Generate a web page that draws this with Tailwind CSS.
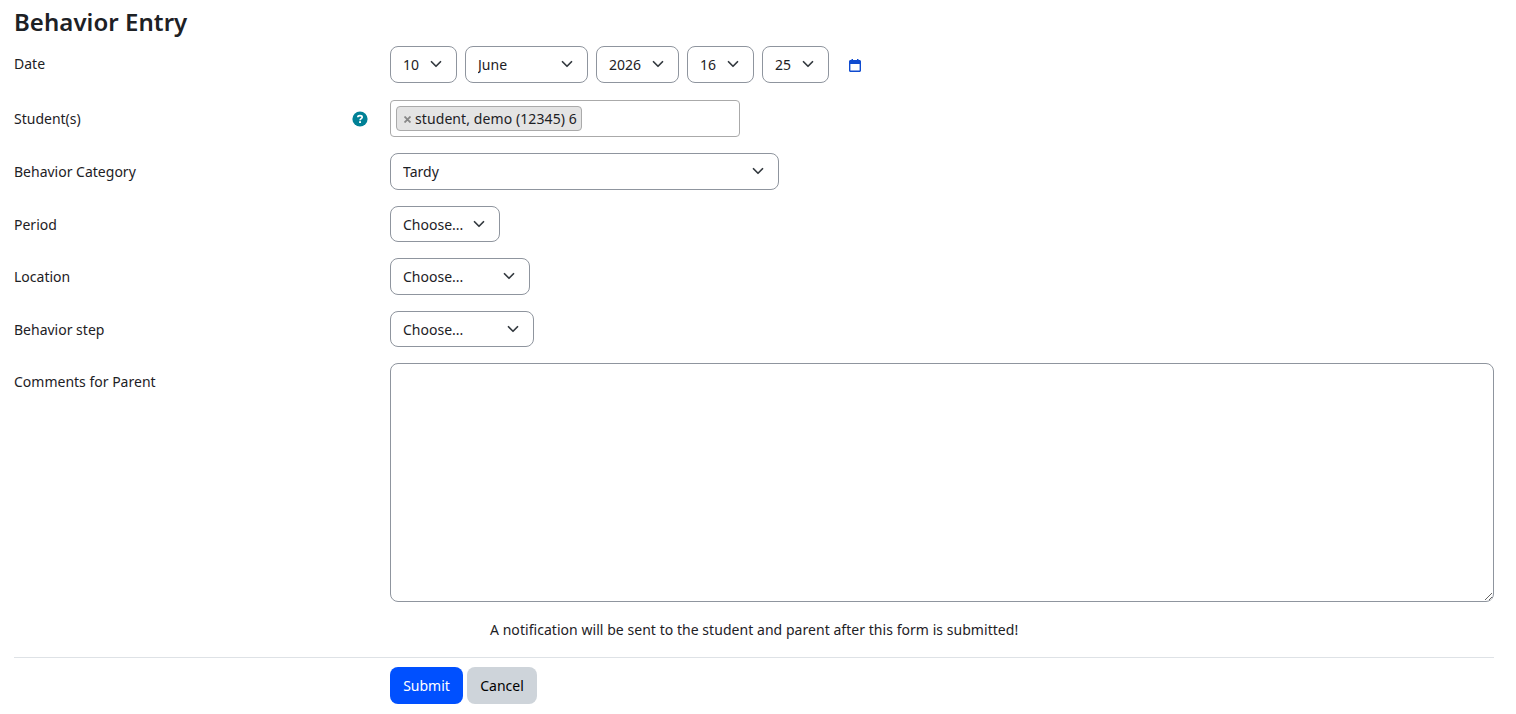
<!DOCTYPE html>
<html lang="en">
<head>
    <meta charset="UTF-8">
    <meta name="viewport" content="width=device-width, initial-scale=1.0">
    <title>Behavior Entry</title>
    <script src="https://cdn.jsdelivr.net/npm/@tailwindcss/browser@4"></script>
</head>
<body class="bg-white text-[#1d2125] font-['Noto_Sans','Open_Sans',sans-serif] text-[14px] leading-[22.5px] overflow-hidden">
<svg class="hidden">
    <symbol id="chevron" viewBox="0 0 16 16">
        <path fill="none" stroke="#343a40" stroke-linecap="round" stroke-linejoin="round" stroke-width="2.300" d="m2 5 6 6 6-6"/>
    </symbol>
</svg>

<main class="pl-[14px] pr-[22px] pt-[8px]">
    <h2 class="text-[24px] font-semibold leading-[28px] tracking-[0.05px] mb-[10px]">Behavior Entry</h2>

    <form onsubmit="return false">
        <!-- Date -->
        <div class="flex mb-[17.5px]">
            <span class="w-[376px] shrink-0 pt-[7px]">Date</span>
            <div class="flex gap-2">
                <div class="relative">
                    <select aria-label="Day" class="appearance-none block w-[67px] h-[36.5px] pl-3 pt-px border border-[#8f959e] rounded-lg bg-white"><option>10</option></select>
                    <svg class="absolute right-[15px] top-[12px] size-3 pointer-events-none"><use href="#chevron"/></svg>
                </div>
                <div class="relative">
                    <select aria-label="Month" class="appearance-none block w-[123px] h-[36.5px] pl-3 pt-px border border-[#8f959e] rounded-lg bg-white"><option>June</option></select>
                    <svg class="absolute right-[15px] top-[12px] size-3 pointer-events-none"><use href="#chevron"/></svg>
                </div>
                <div class="relative">
                    <select aria-label="Year" class="appearance-none block w-[83px] h-[36.5px] pl-3 pt-px border border-[#8f959e] rounded-lg bg-white"><option>2026</option></select>
                    <svg class="absolute right-[15px] top-[12px] size-3 pointer-events-none"><use href="#chevron"/></svg>
                </div>
                <div class="relative">
                    <select aria-label="Hour" class="appearance-none block w-[67px] h-[36.5px] pl-3 pt-px border border-[#8f959e] rounded-lg bg-white"><option>16</option></select>
                    <svg class="absolute right-[15px] top-[12px] size-3 pointer-events-none"><use href="#chevron"/></svg>
                </div>
                <div class="relative">
                    <select aria-label="Minute" class="appearance-none block w-[67px] h-[36.5px] pl-3 pt-px border border-[#8f959e] rounded-lg bg-white"><option>25</option></select>
                    <svg class="absolute right-[15px] top-[12px] size-3 pointer-events-none"><use href="#chevron"/></svg>
                </div>
                <a href="#" aria-label="Calendar" class="ml-[12px] pt-[13px]">
                    <svg class="w-3 h-[13px]" viewBox="0 0 12 13">
                        <path fill="#0f4bd0" fill-rule="evenodd" d="M2.500 0h1.500v1h4V0h1.500v1h1C11.300 1 12 1.700 12 2.500v9c0 .8-.7 1.500-1.500 1.500h-9C.7 13 0 12.300 0 11.500v-9C0 1.700.7 1 1.500 1h1zM1.400 5v6.200c0 .3.100.400.400.400h8.400c.3 0 .4-.100.400-.400V5z"/>
                    </svg>
                </a>
            </div>
        </div>

        <!-- Students -->
        <div class="flex mb-4">
            <div class="w-[376px] shrink-0 flex justify-between pt-[8px] pr-[22px]">
                <span>Student(s)</span>
                <svg class="size-4 mt-[3px]" viewBox="0 0 16 16">
                    <circle cx="8" cy="8" r="7.600" fill="#008196"/>
                    <path fill="none" stroke="#fff" stroke-width="1.700" d="M5.800 6.300C5.900 5.100 6.800 4.700 8 4.700c1.300 0 2.200.6 2.200 1.600C10.200 7.600 8.100 7.600 8.100 9.200"/>
                    <rect x="7.100" y="10.200" width="1.900" height="1.800" fill="#fff"/>
                </svg>
            </div>
            <div class="w-[350px] h-[37px] border border-[#aaa] rounded-[4px] pl-[5px] pt-[5px]">
                <span class="flex items-center w-[186px] h-[25px] border border-[#aaa] rounded-[4px] bg-[#e4e4e4] pl-[7px] pt-px tracking-[0.09px] whitespace-nowrap">
                    <svg class="size-[7px] mr-[4px] mt-px shrink-0" viewBox="0 0 7 7"><path stroke="#888" stroke-width="1.800" d="m.5.500 6 6m0-6-6 6"/></svg>student, demo (12345) 6
                </span>
            </div>
        </div>

        <!-- Behavior category -->
        <div class="flex mb-4">
            <label for="category" class="w-[376px] shrink-0 pt-[8px]">Behavior Category</label>
            <div class="relative">
                <select id="category" class="appearance-none block w-[389px] h-[36.5px] pl-3 pt-[2px] border border-[#8f959e] rounded-lg bg-white"><option>Tardy</option></select>
                <svg class="absolute right-[15px] top-[12px] size-3 pointer-events-none"><use href="#chevron"/></svg>
            </div>
        </div>

        <!-- Period -->
        <div class="flex mb-4">
            <label for="period" class="w-[376px] shrink-0 pt-[8px]">Period</label>
            <div class="relative">
                <select id="period" class="appearance-none block w-[110px] h-[36.5px] pl-3 pt-[2px] border border-[#8f959e] rounded-lg bg-white"><option>Choose...</option></select>
                <svg class="absolute right-[15px] top-[12px] size-3 pointer-events-none"><use href="#chevron"/></svg>
            </div>
        </div>

        <!-- Location -->
        <div class="flex mb-4">
            <label for="location" class="w-[376px] shrink-0 pt-[8px]">Location</label>
            <div class="relative">
                <select id="location" class="appearance-none block w-[140px] h-[36.5px] pl-3 pt-[2px] border border-[#8f959e] rounded-lg bg-white"><option>Choose...</option></select>
                <svg class="absolute right-[15px] top-[12px] size-3 pointer-events-none"><use href="#chevron"/></svg>
            </div>
        </div>

        <!-- Behavior step -->
        <div class="flex mb-4">
            <label for="step" class="w-[376px] shrink-0 pt-[8px]">Behavior step</label>
            <div class="relative">
                <select id="step" class="appearance-none block w-[144px] h-[36.5px] pl-3 pt-[2px] border border-[#8f959e] rounded-lg bg-white"><option>Choose...</option></select>
                <svg class="absolute right-[15px] top-[12px] size-3 pointer-events-none"><use href="#chevron"/></svg>
            </div>
        </div>

        <!-- Comments -->
        <div class="flex mb-[17px]">
            <label for="comments" class="w-[376px] shrink-0 pt-[8px]">Comments for Parent</label>
            <textarea id="comments" class="block w-full h-[239px] px-3 py-1.5 border border-[#8f959e] rounded-lg"></textarea>
        </div>

        <p class="pl-[476px] mb-[15px] tracking-[0.045px]">A notification will be sent to the student and parent after this form is submitted!</p>

        <div class="flex gap-1 border-t border-[#dee2e6] pl-[376px] pt-[9px]">
            <button type="submit" class="w-[73px] h-[37px] pt-[2px] rounded-lg bg-[#0050ff] text-white">Submit</button>
            <button type="button" class="w-[70px] h-[37px] pt-[2px] rounded-lg bg-[#ced4da] text-black">Cancel</button>
        </div>
    </form>
</main>
</body>
</html>
